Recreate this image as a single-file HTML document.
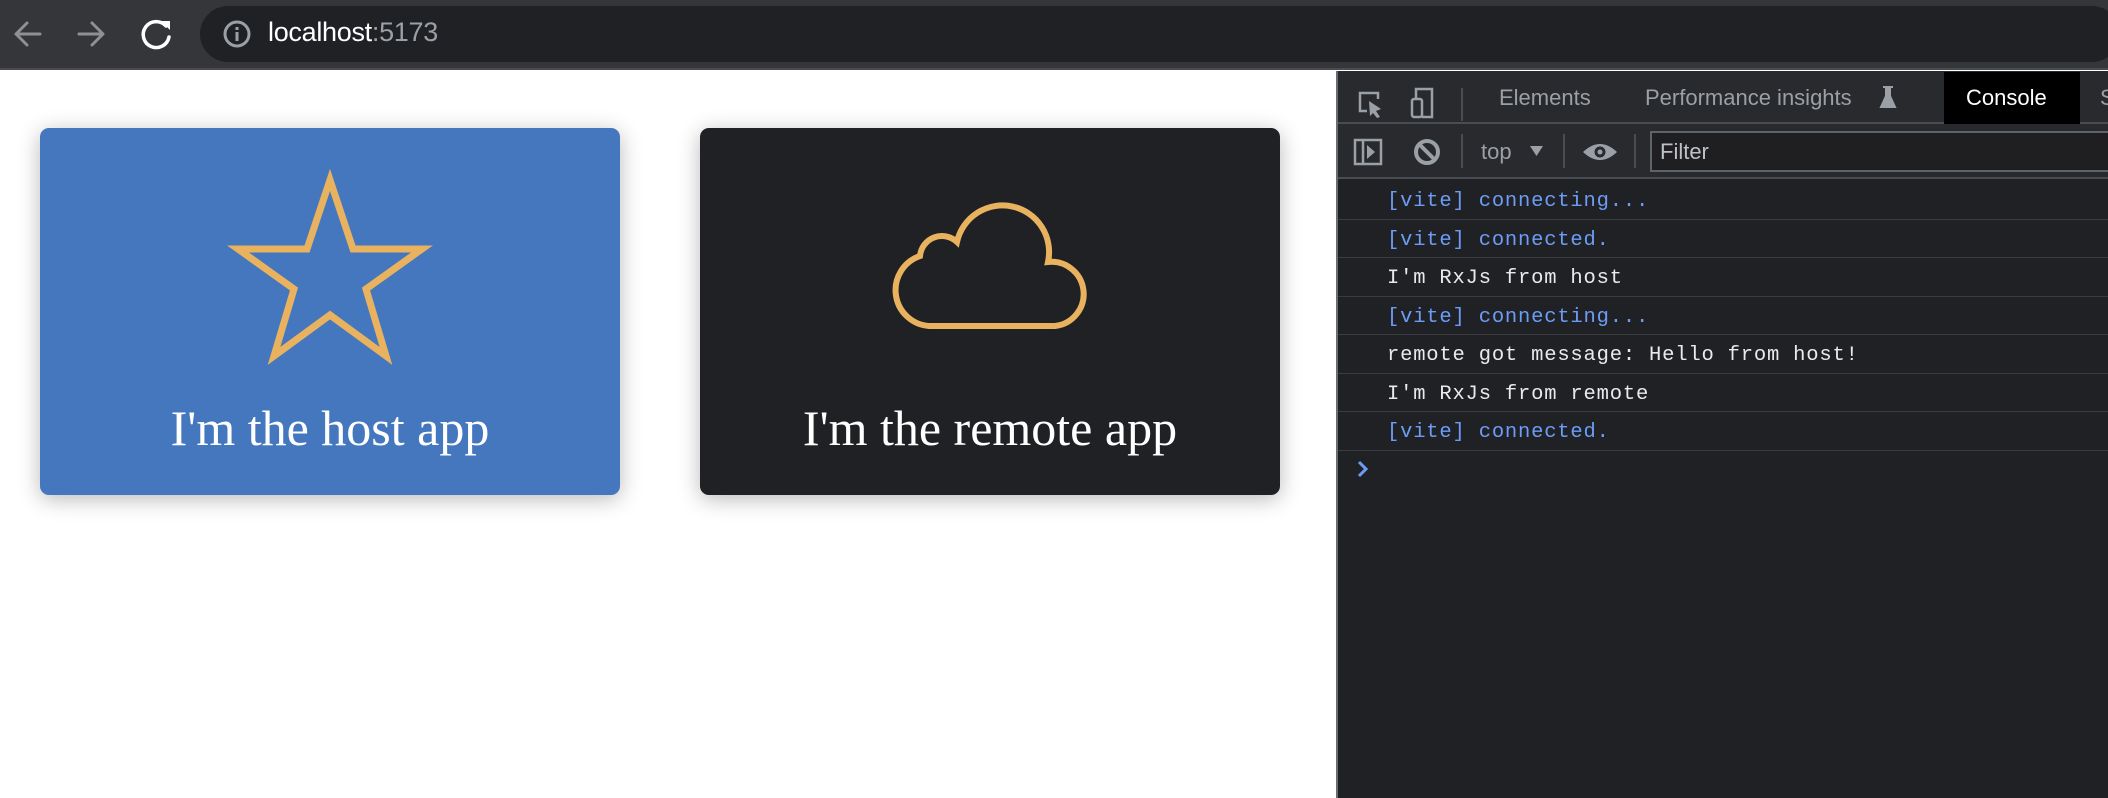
<!DOCTYPE html>
<html><head><meta charset="utf-8"><style>
*{margin:0;padding:0;box-sizing:border-box}
body{width:2108px;height:798px;overflow:hidden;background:#fff;position:relative;font-family:"Liberation Sans",sans-serif}
.abs{position:absolute}
#bar{left:0;top:0;width:2108px;height:70px;background:#35363a;border-bottom:2px solid #4a4b4f}
#pill{left:200px;top:6px;width:1920px;height:56px;border-radius:28px;background:#202124}
.url{left:268px;top:17px;font-size:27px;color:#fff;letter-spacing:-0.3px}
.url span{color:#9aa0a6}
.card{top:128px;width:580px;height:367px;border-radius:9px;box-shadow:0 4px 22px rgba(0,0,0,.28)}
.ct{position:absolute;left:0;width:100%;text-align:center;top:275px;font-family:"Liberation Serif",serif;font-size:50px;color:#fff;line-height:1}
#dev{left:1336px;top:71px;width:772px;height:727px;background:#202124;border-left:2px solid #6b6c70}
.tabs{left:1338px;top:71px;width:770px;height:53px;background:#292a2d;border-bottom:2px solid #494c50}
.tb{left:1338px;top:124px;width:770px;height:55px;background:#292a2d;border-bottom:2px solid #494c50}
.tt{font-size:22px;color:#9aa0a6;top:85px}
.row{left:1338px;width:770px;height:38.5px;border-bottom:1.5px solid #3a3b3e;font-family:"Liberation Mono",monospace;font-size:20.5px;color:#e8eaed;padding-left:49px;line-height:41px;letter-spacing:0.8px}
.b{color:#6d9cf7}
</style></head><body>
<div id="bar" class="abs"></div>
<div id="pill" class="abs"></div>
<svg class="abs" style="left:0;top:0" width="200" height="70">
<g fill="none" stroke="#8e9094" stroke-width="3" stroke-linecap="round" stroke-linejoin="round">
<path d="M40 34H16M27 23L16 34L27 45"/><path d="M79 34H103M92 23L103 34L92 45"/></g>
<path d="M166 26A13 13 0 1 0 169 37" fill="none" stroke="#fff" stroke-width="3.5" stroke-linecap="round"/>
<path d="M161 21L170 21L170 30Z" fill="#fff"/>
</svg>
<svg class="abs" style="left:222px;top:19px" width="32" height="32"><circle cx="15" cy="15" r="12" fill="none" stroke="#9aa0a6" stroke-width="3"/><rect x="13.5" y="13" width="3" height="9" fill="#9aa0a6"/><rect x="13.5" y="8" width="3" height="3" fill="#9aa0a6"/></svg>
<div class="abs url">localhost<span>:5173</span></div>

<div class="abs card" style="left:40px;background:#4577bf">
<div class="ct">I'm the host app</div></div>
<svg class="abs" style="left:0;top:0" width="700" height="520"><path d="M330 180L353 249H422L366 289L386 356L330 315L274 356L294 289L238 249H307Z" fill="none" stroke="#e9b25f" stroke-width="7" stroke-linejoin="miter"/></svg>
<div class="abs card" style="left:700px;background:#202124">
<div class="ct">I'm the remote app</div></div>
<svg class="abs" style="left:0;top:0" width="1330" height="520"><path d="M929 326A36 36 0 0 1 920 256A22 22 0 0 1 957 242A46.2 46.2 0 0 1 1048 262A32 32 0 0 1 1055 326Z" fill="none" stroke="#e9b25f" stroke-width="6"/></svg>

<div id="dev" class="abs"></div>
<div class="abs tabs"></div>
<div class="abs" style="left:1944px;top:72px;width:136px;height:52px;background:#000"></div>
<svg class="abs" style="left:1338px;top:71px" width="150" height="110">
<g fill="none" stroke="#9aa0a6" stroke-width="2.5"><path d="M29 40H22V22H40V28"/><rect x="74" y="28" width="10" height="18" rx="2"/><path d="M78 28V18H94V46H84"/></g>
<path d="M31 30L43 38L38 40L42 46L39 47L35 42L32 45Z" fill="#9aa0a6"/>
<rect x="123" y="17" width="2" height="33" fill="#4a4c50"/>
</svg>
<div class="abs tt" style="left:1499px">Elements</div>
<div class="abs tt" style="left:1645px">Performance insights</div>
<svg class="abs" style="left:1879px;top:86px" width="20" height="24"><path d="M4 1H14M7 1V10L2 21H16L11 10V1" fill="#9aa0a6" stroke="#9aa0a6" stroke-width="2"/></svg>
<div class="abs tt" style="left:1966px;color:#fff">Console</div>
<div class="abs tt" style="left:2100px">S</div>

<div class="abs tb"></div>
<svg class="abs" style="left:1338px;top:124px" width="320" height="56">
<g fill="none" stroke="#9aa0a6" stroke-width="2.5"><rect x="17" y="16" width="26" height="24"/><path d="M25 16V40"/><circle cx="89" cy="28" r="11" stroke-width="4"/><path d="M81 20L97 36" stroke-width="4"/></g>
<path d="M29 21L37 28L29 35Z" fill="#9aa0a6"/>
<path d="M192 22H205L198.5 32Z" fill="#9aa0a6"/>
<path d="M245 28Q262 12 279 28Q262 44 245 28Z" fill="#9aa0a6"/><circle cx="262" cy="28" r="5.5" fill="#292a2d"/><circle cx="262" cy="28" r="2.5" fill="#9aa0a6"/>
<rect x="123" y="10" width="2" height="34" fill="#4a4c50"/><rect x="225" y="10" width="2" height="34" fill="#4a4c50"/><rect x="296" y="10" width="2" height="34" fill="#4a4c50"/>
</svg>
<div class="abs" style="left:1481px;top:139px;font-size:22px;color:#9aa0a6">top</div>
<div class="abs" style="left:1650px;top:131px;width:460px;height:41px;background:#1f1f21;border:2px solid #5f6368;font-size:22px;color:#bdc1c6;padding:6px 0 0 8px">Filter</div>

<div class="abs row b" style="top:181px">[vite] connecting...</div>
<div class="abs row b" style="top:219.5px">[vite] connected.</div>
<div class="abs row" style="top:258px">I'm RxJs from host</div>
<div class="abs row b" style="top:296.5px">[vite] connecting...</div>
<div class="abs row" style="top:335px">remote got message: Hello from host!</div>
<div class="abs row" style="top:373.5px">I'm RxJs from remote</div>
<div class="abs row b" style="top:412px">[vite] connected.</div>
<svg class="abs" style="left:1354px;top:458px" width="20" height="22"><path d="M5 4L12 11L5 18" fill="none" stroke="#6d9cf7" stroke-width="3"/></svg>
</body></html>
